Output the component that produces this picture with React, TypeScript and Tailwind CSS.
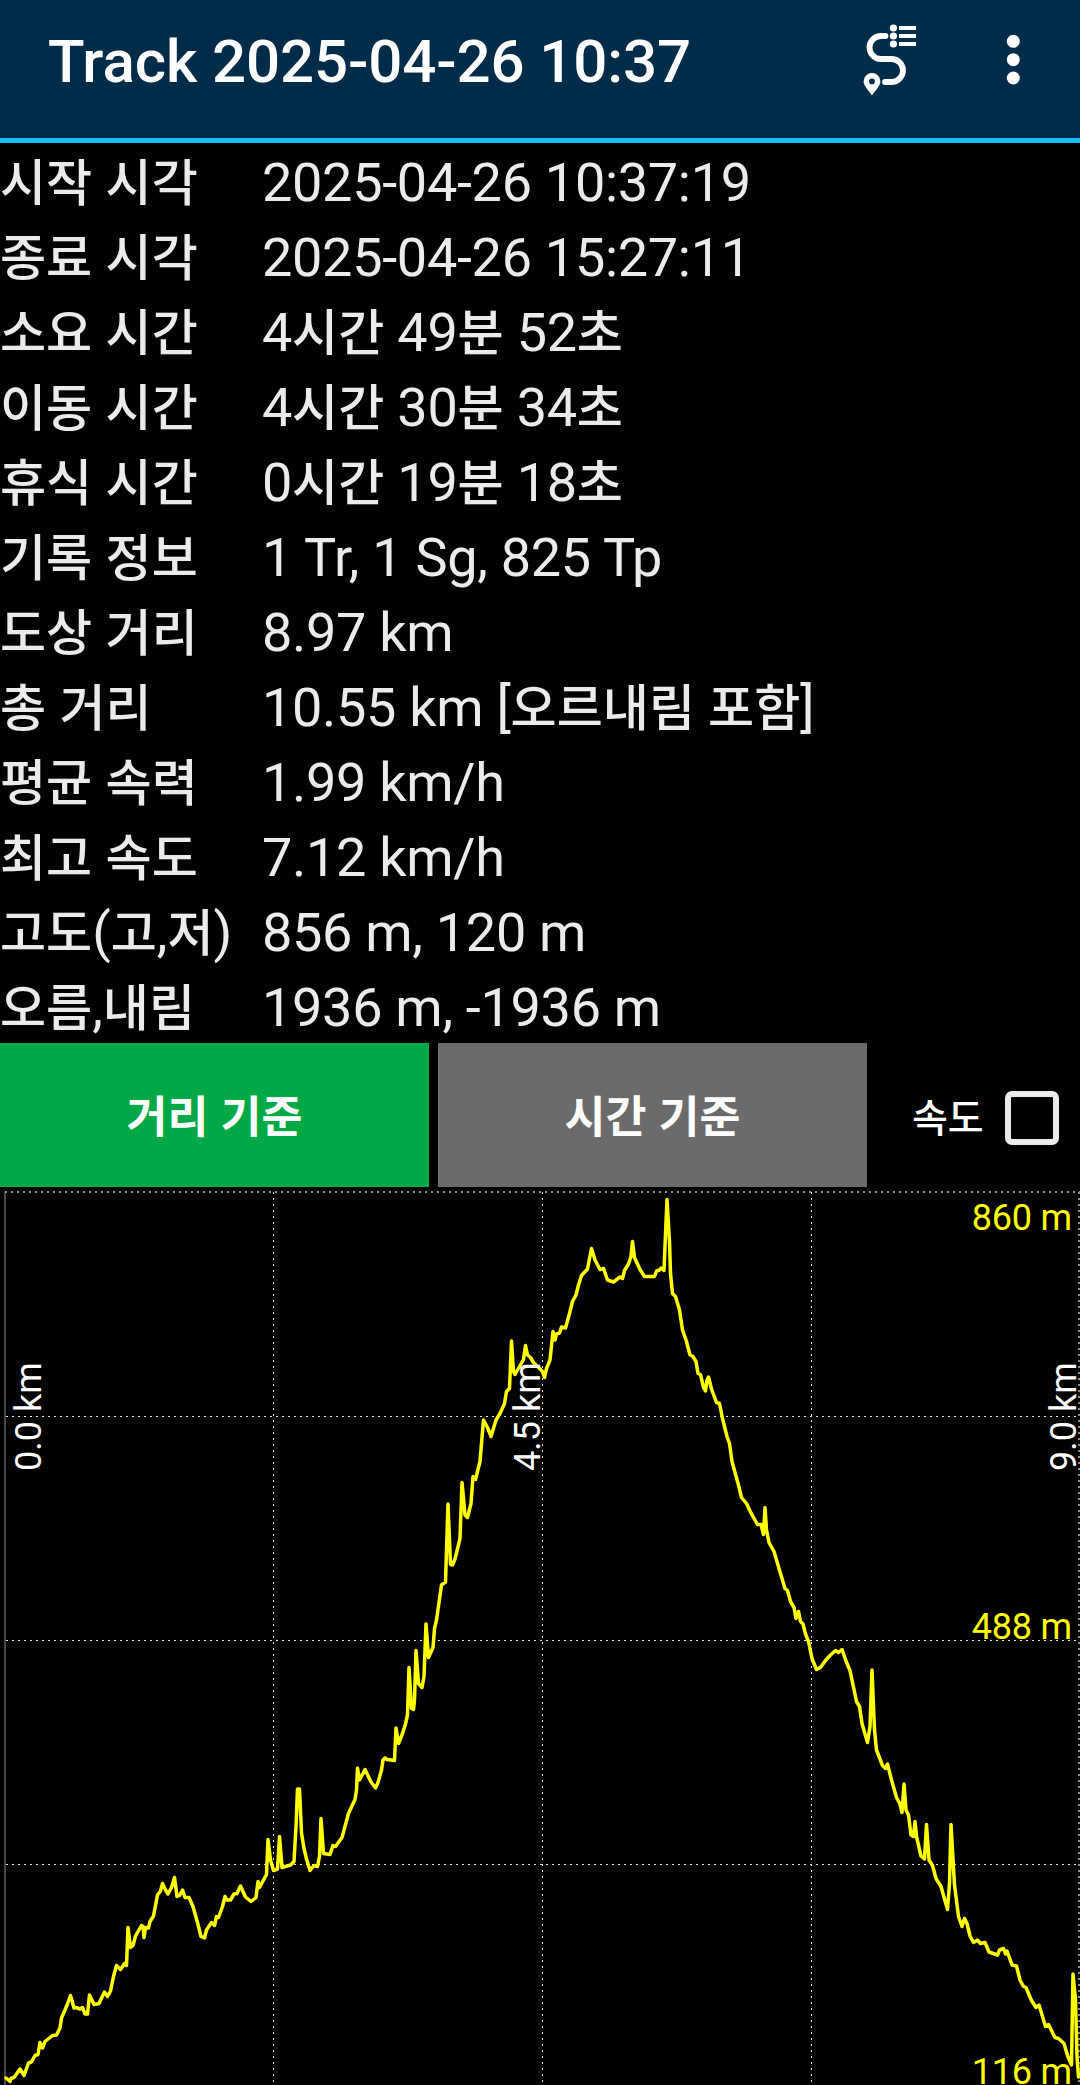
import React, { useState } from "react";

interface InfoRow {
  label: string;
  value: string;
}

const TRACK_INFO: InfoRow[] = [
  { label: "시작 시각", value: "2025-04-26 10:37:19" },
  { label: "종료 시각", value: "2025-04-26 15:27:11" },
  { label: "소요 시간", value: "4시간 49분 52초" },
  { label: "이동 시간", value: "4시간 30분 34초" },
  { label: "휴식 시간", value: "0시간 19분 18초" },
  { label: "기록 정보", value: "1 Tr, 1 Sg, 825 Tp" },
  { label: "도상 거리", value: "8.97 km" },
  { label: "총 거리", value: "10.55 km [오르내림 포함]" },
  { label: "평균 속력", value: "1.99 km/h" },
  { label: "최고 속도", value: "7.12 km/h" },
  { label: "고도(고,저)", value: "856 m, 120 m" },
  { label: "오름,내림", value: "1936 m, -1936 m" },
];

// Elevation profile, in chart units
const PROFILE =
  "6,2078 10,2081.5 11,2078.5 14,2077.5 20,2069 24,2075.5 28.5,2063 31.5,2062 35,2055.5 38,2054.5 40,2042.5 42.5,2048 45,2041.5 52.5,2035.5 56.5,2035 60,2028 61.5,2018 66.5,2006.5 70.5,1995.5 74,2008 76,2007.5 80,2009 82.5,2007.5 85,2014 87.5,2014 89.5,1995 94,2004.5 99,2003.5 104.5,1992 107.5,1996.5 110.5,1991 113.5,1976.5 116.5,1965.5 120.5,1969.5 124.5,1963.5 126.5,1965.5 128,1927.5 130.5,1947.5 133,1945.5 135.5,1936 141.5,1925.5 143,1926.5 144,1937.5 145.5,1927.5 148.5,1928 150,1921.5 153.5,1916 157.5,1895 160.5,1891 162.5,1883.5 165.5,1890 168,1894 171.5,1887.5 174.5,1877.5 177,1896.5 179.5,1895.5 182.5,1890 185,1897.5 189,1897.5 193,1906.5 197.5,1922.5 201,1936.5 204.5,1938 206.5,1930 211.5,1922.5 214.5,1925.5 216.5,1916.5 218.5,1917.5 222.5,1906.5 225,1896.5 227,1900 230.5,1900 234,1894 237,1893.5 240.5,1886 245.5,1897 251,1901.5 256,1897.5 258,1881.5 259.5,1887.5 266.5,1874.5 " +
  "268,1839.5 270.5,1860 273.5,1870.5 277.5,1869 279.5,1836.5 282,1867.5 290.5,1865 294,1861.5 296,1826.5 297.5,1789 299.5,1789 301.5,1833 304,1848.5 306.5,1859 310,1870.5 314,1865.5 317.5,1866.5 319.5,1856.5 321,1818.5 323.5,1853.5 330,1854.5 333,1845.5 335.5,1846.5 342,1837.5 348.5,1813.5 355,1799.5 356.5,1790 357.5,1768 359.5,1780 365,1769.5 371,1782 375.5,1788 378,1782.5 381.5,1770 383,1760 385,1758 387,1759.5 394.5,1760.5 396,1728 398.5,1743.5 402.5,1733.5 405.5,1724 407.5,1715 409,1667.5 411.5,1708.5 413.5,1709.5 414.5,1700 416,1650.5 418.5,1683.5 422,1687.5 424,1676.5 426,1624 428.5,1657.5 433,1647.5 434.5,1628.5 436.5,1620 " +
  "441.5,1585 445.5,1582 448,1504 450.5,1564.5 452.5,1565 455,1559 460,1538.5 462,1482.5 465,1515 467.5,1517.5 471,1503.5 473,1476.5 475.5,1479.5 480,1461.5 481.5,1443.5 483.5,1420 487.5,1427.5 491,1436.5 496,1420 500,1413.5 504.5,1403.5 506.5,1391.5 509.5,1388.5 511.5,1341 513.5,1371.5 515,1374.5 523.5,1359.5 525.5,1345.5 527.5,1355 530.5,1357.5 533.5,1362.5 542.5,1371.5 544.5,1377.5 546.5,1368.5 550,1360 553,1331.5 555,1340 556.5,1334 559.5,1333 561.5,1327 565.5,1328 569.5,1313.5 572.5,1301.5 576,1295 578.5,1285 581.5,1275.5 587.5,1269 591.5,1248.5 595,1260 600,1269.5 603.5,1268.5 607.5,1280 613.5,1282 620,1277 622.5,1278.5 624.5,1270.5 628.5,1264 631,1256.5 632.5,1241.5 634.5,1257.5 640,1269.5 644.5,1276.5 654.5,1276.5 656.5,1271 659.5,1270 661,1268 664,1270.5 665.7,1230 667,1199.5 669.5,1241.5 670.5,1273.5 672.5,1293.5 675.5,1296.5 679.5,1310 682.5,1330 686.5,1341.5 690,1355 692.5,1356 696,1361.5 698,1373.5 700.5,1374.5 " +
  "703.5,1387.5 705.5,1391 707,1380 708.5,1377 711.5,1389 716.5,1402.5 719.5,1403.5 722.5,1418.5 727,1436.5 729.5,1443.5 732,1461.5 737.5,1481.5 739.5,1489 741.5,1497.5 746.5,1503.5 751.5,1514 757.5,1524.5 761,1524.5 763.5,1534.5 765,1507.5 766.5,1530 769,1542.5 774,1551.5 780.5,1573.5 785,1588.5 787.5,1590.5 790.5,1601.5 794,1607.5 796,1618.5 798.5,1611.5 800.5,1621.5 803,1624 805.5,1634 808.5,1641.5 812,1658.5 816.5,1669.5 820.5,1667.5 825.5,1660.5 830.5,1655 835.5,1650.5 838.5,1652.5 842,1649.5 846,1661 850,1670.5 856.5,1701.5 859.5,1706.5 862,1723.5 867.5,1742.5 870,1726.5 872,1670 874.5,1730 876.5,1750 882.5,1765.5 885.5,1768.5 887.5,1764 891.5,1780 896.5,1797.5 900,1804 902,1812.5 904,1784 906,1810 908.5,1815 911,1835 913.5,1836.5 915,1821.5 916.5,1836.5 921,1856 924.5,1859 926.5,1824.5 929,1860 932.5,1865.5 936,1878.5 941,1886.5 947.5,1909.5 949.5,1883.5 951,1824.5 954.5,1885 958.5,1916.5 962,1926.5 964.5,1918.5 967,1923.5 970,1936 973.5,1942.5 977.5,1940 980.5,1943.5 985,1942.5 989,1952 997.5,1955 999.5,1950 1003.5,1948.5 1005.5,1954 1007,1951 1012,1965 1016.5,1966 1020,1980 1023.5,1986.5 1026,1987.5 1031.5,2000.5 1036,2007.5 1039,2005 1045.5,2026.5 1048.5,2024.5 1055,2037.5 1058.5,2038.5 1064,2043.5 1067.5,2055.5 1071.5,2065 1073,1974 1075.5,2000 1077,2057 1078.5,2077";

// Hangul is set slightly smaller than the latin text around it
function Mixed({ text, bold = false }: { text: string; bold?: boolean }) {
  return (
    <>
      {text.split(/([가-힣]+)/).map((part, i) =>
        i % 2 === 1 ? (
          <span
            key={i}
            className={`text-[0.928em] tracking-normal ${
              bold ? "font-bold" : "font-medium"
            }`}
          >
            {part}
          </span>
        ) : (
          part
        ),
      )}
    </>
  );
}

function Header() {
  return (
    <header className="flex h-[143px] items-start justify-between border-b-5 border-[#12c0f8] bg-[#002b49] pl-12">
      <h1 className="pt-[27px] text-[60px] leading-[70px] font-medium tracking-[-0.1px] text-white">
        Track 2025-04-26 10:37
      </h1>
      <div className="flex">
        <button type="button" title="Track list" className="mr-[68px]">
          <svg className="h-[120px] w-[60px]" viewBox="860 0 60 120" fill="#fff">
            <path
              d="M885.5 36H881a11.5 11.5 0 0 0 0 23h10.5a11.5 11.5 0 0 1 0 23H885"
              fill="none"
              stroke="#fff"
              strokeWidth="5.8"
              strokeLinecap="round"
            />
            <circle cx="893.4" cy="28" r="3.6" />
            <circle cx="893.4" cy="36" r="3.6" />
            <circle cx="893.4" cy="44" r="3.6" />
            <path d="M899 26h17v4h-17zM899 34h17v4h-17zM899 42h17v4h-17z" />
            <path
              fillRule="evenodd"
              d="M872 73a8.4 8.4 0 0 1 8.4 8.4c0 4.6-5 8.6-8.4 14-3.4-5.4-8.4-9.4-8.4-14a8.4 8.4 0 0 1 8.4-8.4zM872 78.5a2.9 2.9 0 1 0 0 5.8a2.9 2.9 0 0 0 0-5.8z"
            />
          </svg>
        </button>
        <button type="button" title="More" className="mr-[52px]">
          <svg className="h-[120px] w-[40px]" viewBox="0 0 40 120" fill="#fff">
            <circle cx="25.3" cy="41.3" r="6.5" />
            <circle cx="25.3" cy="59.7" r="6.5" />
            <circle cx="25.3" cy="78" r="6.5" />
          </svg>
        </button>
      </div>
    </header>
  );
}

function ElevationChart() {
  return (
    <svg
      className="block h-[898px] w-[1080px]"
      viewBox="0 1187 1080 898"
      fontSize="36"
    >
      <path d="M5 1192V2085" stroke="#484848" strokeWidth="2" />
      <path
        d="M5 1192H1080M1079 1192V2085"
        stroke="#8c8c8c"
        strokeWidth="2"
        strokeDasharray="2 4"
      />
      <path
        d="M6 1416.5H1080M6 1640.5H1080M6 1864.5H1080M273.5 1192V2085M542.5 1192V2085M811.5 1192V2085"
        stroke="#e8e8e8"
        strokeWidth="1"
        strokeDasharray="2 4"
      />
      <polyline
        points={PROFILE}
        fill="none"
        stroke="#ff0"
        strokeWidth="3.5"
        strokeLinejoin="round"
        strokeLinecap="round"
      />
      <g fill="#ff0" textAnchor="end" letterSpacing="-0.2">
        <text x="1072" y="1230">860 m</text>
        <text x="1072" y="1639">488 m</text>
        <text x="1072" y="2084">116 m</text>
      </g>
      <g fill="#fff">
        <text transform="translate(41 1471) rotate(-90)">0.0 km</text>
        <text transform="translate(540 1471) rotate(-90)">4.5 km</text>
        <text transform="translate(1076 1471) rotate(-90)">9.0 km</text>
      </g>
    </svg>
  );
}

export default function App() {
  const [mode, setMode] = useState<"distance" | "time">("distance");
  const [showSpeed, setShowSpeed] = useState(false);

  return (
    <div className="h-[2085px] w-[1080px] overflow-hidden bg-black font-['Roboto','Noto_Sans_CJK_KR',sans-serif]">
      <Header />

      {/* Track summary */}
      <dl className="h-[900px] pt-0.5 text-[54px] leading-[75px] text-[#ebebeb]">
        {TRACK_INFO.map((row) => (
          <div key={row.label} className="flex h-[75px] whitespace-nowrap">
            <dt className="w-[262px]">
              <Mixed text={row.label} />
            </dt>
            <dd className="tracking-[-0.29px]">
              <Mixed text={row.value} />
            </dd>
          </div>
        ))}
      </dl>

      {/* Chart mode */}
      <div className="flex h-36 items-stretch text-[48px] text-white">
        <button
          type="button"
          onClick={() => setMode("distance")}
          className={`mr-[9px] w-[429px] pt-1 font-bold ${
            mode === "distance" ? "bg-[#00a846]" : "bg-[#6b6b6b]"
          }`}
        >
          <Mixed text="거리 기준" bold />
        </button>
        <button
          type="button"
          onClick={() => setMode("time")}
          className={`w-[429px] pt-1 font-bold ${
            mode === "time" ? "bg-[#00a846]" : "bg-[#6b6b6b]"
          }`}
        >
          <Mixed text="시간 기준" bold />
        </button>
        <label className="ml-[45px] flex items-center text-[42px]">
          <span className="w-[93px] pt-1">
            <Mixed text="속도" />
          </span>
          <input
            type="checkbox"
            checked={showSpeed}
            onChange={(e: React.ChangeEvent<HTMLInputElement>) =>
              setShowSpeed(e.target.checked)
            }
            className="mt-1.5 size-[54px] appearance-none rounded-[7px] border-6 border-[#ebebeb] checked:bg-[#00a846]"
          />
        </label>
      </div>

      <ElevationChart />
    </div>
  );
}
